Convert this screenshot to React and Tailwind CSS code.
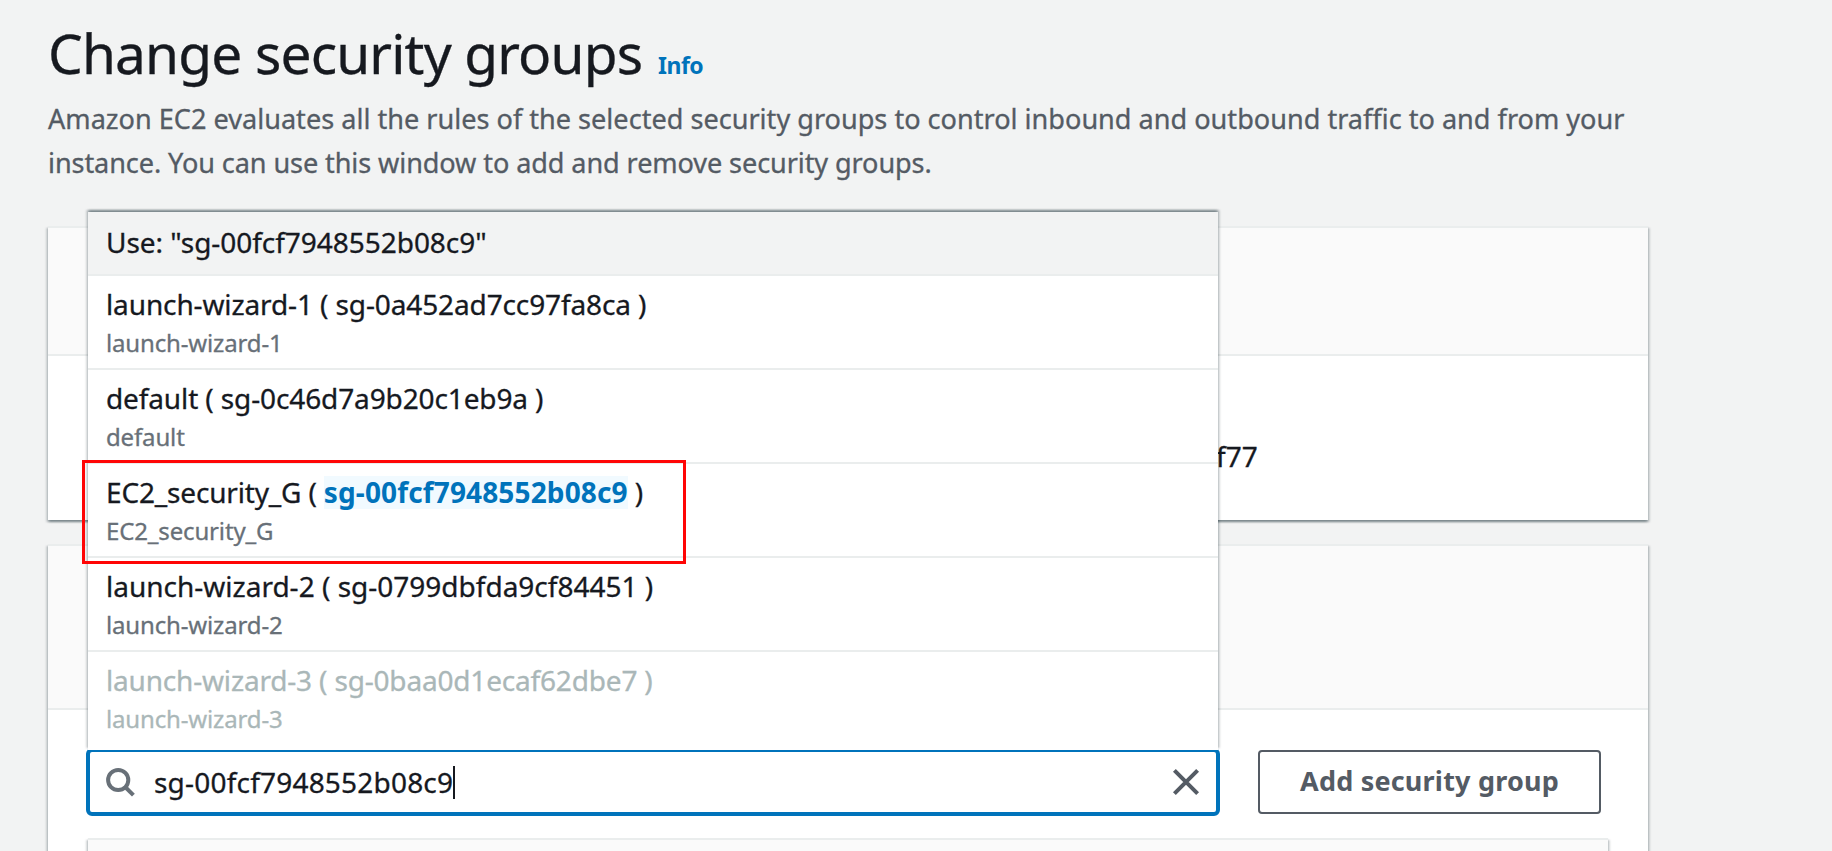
const CARD_SHADOW =
  "shadow-[0_2px_2px_0_rgba(0,28,36,0.3),2px_2px_2px_0_rgba(0,28,36,0.15),-2px_2px_2px_0_rgba(0,28,36,0.15)]"
const MENU_SHADOW =
  "shadow-[0_-2px_2px_0_rgba(0,28,36,0.3),2px_-2px_2px_0_rgba(0,28,36,0.15),-2px_-2px_2px_0_rgba(0,28,36,0.15)]"

const OPTIONS = [
  { name: "launch-wizard-1", id: "sg-0a452ad7cc97fa8ca", tracking: "tracking-[-0.12px]" },
  { name: "default", id: "sg-0c46d7a9b20c1eb9a", tracking: "tracking-[-0.12px]" },
  { name: "EC2_security_G", id: "sg-00fcf7948552b08c9", tracking: "tracking-[-0.17px]", match: true },
  { name: "launch-wizard-2", id: "sg-0799dbfda9cf84451", tracking: "tracking-normal" },
  { name: "launch-wizard-3", id: "sg-0baa0d1ecaf62dbe7", tracking: "tracking-[-0.18px]", disabled: true },
]

function Option({ name, id, tracking, match, disabled }) {
  return (
    <li
      className={`h-[94px] border-b-2 border-[#eaeded] px-[18px] pt-1.5 last:h-[98px] last:border-b-0 ${
        disabled ? "text-[#aab7b8]" : "text-[#16191f]"
      }`}
    >
      <div className={`h-11 text-[28px] leading-[44px] whitespace-pre ${tracking}`}>
        {name} ({" "}
        {match ? (
          <mark className="inline-block bg-[#f1faff] leading-[33px] font-bold tracking-[0.14px] text-[#0073bb] [-webkit-text-stroke:0px]">
            {id}
          </mark>
        ) : (
          id
        )}
        {" )"}
      </div>
      <div className={`mt-px text-[24px] leading-8 tracking-[-0.15px] ${disabled ? "" : "text-[#687078]"}`}>
        {name}
      </div>
    </li>
  )
}

function Dropdown() {
  return (
    <div className={`absolute bottom-[66px] left-0.5 z-10 h-[538px] w-[1130px] bg-white ${MENU_SHADOW}`}>
      <ul>
        <li className="h-16 border-b-2 border-[#eaeded] bg-[#f2f3f3] px-[18px] pt-2 text-[28px] leading-[44px] tracking-[-0.04px] text-[#16191f]">
          Use: "sg-00fcf7948552b08c9"
        </li>
        {OPTIONS.map((o) => (
          <Option key={o.name} {...o} />
        ))}
      </ul>
      <div className="absolute top-[247.5px] -left-1.5 h-[104px] w-[604px] border-[3px] border-[#ff0505]" />
    </div>
  )
}

function SearchIcon() {
  return (
    <svg className="h-8 w-8" viewBox="0 0 32 32" fill="none" stroke="#687078" strokeWidth="4">
      <circle cx="14.2" cy="14" r="10.1" />
      <path d="M21.2 21 L29.4 29.2" />
    </svg>
  )
}

function ClearIcon() {
  return (
    <svg className="h-8 w-8" viewBox="0 0 32 32" fill="none" stroke="#545b64" strokeWidth="4">
      <path d="M4.4 4.4 L27.6 27.6 M27.6 4.4 L4.4 27.6" />
    </svg>
  )
}

export default function App() {
  return (
    <main className="h-[851px] w-[1832px] overflow-hidden bg-[#f2f3f3] px-12 pt-[17px] font-['Noto_Sans','Open_Sans',sans-serif] [-webkit-text-stroke:0.3px]">
      <header className="h-[209px]">
        <div className="flex items-baseline">
          <h1 className="w-[610px] text-[55px] leading-[72px] tracking-[-0.83px] whitespace-nowrap text-[#16191f]">
            Change security groups
          </h1>
          <a className="text-[23px] font-bold tracking-[-0.5px] text-[#0073bb] [-webkit-text-stroke:0px]">Info</a>
        </div>
        <p className="pt-2 text-[27.1px] leading-[44px] whitespace-nowrap text-[#545b64]">
          Amazon EC2 evaluates all the rules of the selected security groups to control inbound and outbound traffic to
          and from your
          <br />
          <span className="tracking-[-0.1px]">
            instance. You can use this window to add and remove security groups.
          </span>
        </p>
      </header>

      <section className={`h-[294px] w-[1600px] border-t-2 border-[#eaeded] bg-white ${CARD_SHADOW}`}>
        <div className="h-32 border-b-2 border-[#eaeded] bg-[#fafafa]" />
        <div className="pt-[78px] pl-[1168px] text-[28px] leading-[44px] text-[#16191f]">f77</div>
      </section>

      <section className={`mt-6 h-[400px] w-[1600px] border-t-2 border-[#eaeded] bg-white ${CARD_SHADOW}`}>
        <div className="h-[164px] border-b-2 border-[#eaeded] bg-[#fafafa]" />
        <div className="flex items-center gap-[38px] pt-[38px] pl-[38px]">
          <div className="relative h-[68px] w-[1134px]">
            <div className="flex h-full items-center rounded-[6px] border-4 border-[#0073bb] bg-white pr-3.5 pl-3.5">
              <SearchIcon />
              <div className="flex flex-1 items-center pl-[18px]">
                <span className="text-[28px] leading-[44px] tracking-[0.2px] text-[#16191f]">
                  sg-00fcf7948552b08c9
                </span>
                <span className="h-[33px] w-0.5 bg-[#16191f]" />
              </div>
              <ClearIcon />
            </div>
            <Dropdown />
          </div>
          <button className="h-16 w-[343px] rounded-[4px] border-2 border-[#545b64] bg-white pb-0.5 text-[27px] font-bold tracking-[0.2px] text-[#545b64] [-webkit-text-stroke:0px]">
            Add security group
          </button>
        </div>
        <div className={`mt-[22px] ml-10 h-40 w-[1520px] border-t-2 border-[#eaeded] bg-[#fafafa] ${CARD_SHADOW}`} />
      </section>
    </main>
  )
}
